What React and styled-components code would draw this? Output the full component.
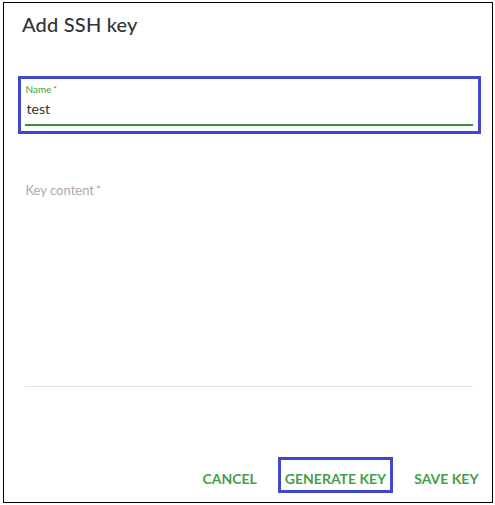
import React from "react";
import styled, { createGlobalStyle } from "styled-components";

const Global = createGlobalStyle`
  html, body { margin: 0; padding: 0; background: #fff; }
  body { font-family: Lato, "Open Sans", sans-serif; }
`;

const Frame = styled.div`
  box-sizing: border-box;
  margin: 2px 0 0 3px;
  width: 490px;
  height: 501px;
  border: 1.5px solid #000;
  display: flex;
  flex-direction: column;
  background: #fff;
`;

const Title = styled.h2`
  margin: 0;
  padding: 9px 0 0 18px;
  font-size: 20px;
  line-height: 25px;
  font-weight: 500;
  color: #333;
  letter-spacing: 0.2px;
`;

const Field = styled.div`
  box-sizing: border-box;
  margin: ${(p) => p.$top}px 11px 0 13.5px;
  border: 3px solid ${(p) => (p.$highlight ? "#4047cc" : "transparent")};
  padding: 4px 5px 5px 4px;
  display: flex;
  flex-direction: column;
`;

const Label = styled.label`
  font-size: ${(p) => (p.$focused ? "10px" : "13px")};
  line-height: ${(p) => (p.$focused ? "12px" : "16px")};
  color: ${(p) => (p.$focused ? "#43a047" : "#aaa")};
  padding-left: 1px;
`;

const Star = styled.span`
  color: ${(p) => (p.$focused ? "#e53935" : "#aaa")};
  margin-left: 2px;
  font-size: ${(p) => (p.$focused ? "8px" : "11px")};
  vertical-align: top;
`;

const Value = styled.div`
  margin-top: 5px;
  padding-left: 2px;
  font-size: 14px;
  line-height: 18px;
  color: #333;
  padding-bottom: 6px;
  border-bottom: 2px solid #388e3c;
`;

const TextArea = styled.div`
  height: 188px;
  border-bottom: 1px solid #e0e0e0;
`;

const Spacer = styled.div`
  flex: 1;
`;

const Actions = styled.div`
  display: flex;
  justify-content: flex-end;
  align-items: flex-start;
  gap: 15px;
  padding: 0 7px 9px 0;
`;

const Button = styled.button`
  box-sizing: border-box;
  height: 36px;
  border: 3px solid ${(p) => (p.$highlight ? "#4047cc" : "transparent")};
  background: none;
  padding: 11px 3.5px 0;
  font-family: Lato, "Open Sans", sans-serif;
  font-weight: 700;
  font-size: 14px;
  line-height: 16px;
  color: #43a047;
  text-transform: uppercase;
  cursor: pointer;
  display: flex;
  align-items: flex-start;
`;

export default function App() {
  return (
    <>
      <Global />
      <Frame>
        <Title>Add SSH key</Title>
        <Field $highlight $top={39}>
          <Label $focused>
            Name<Star $focused>*</Star>
          </Label>
          <Value>test</Value>
        </Field>
        <Field $top={41}>
          <Label>
            Key content<Star>*</Star>
          </Label>
          <TextArea />
        </Field>
        <Spacer />
        <Actions>
          <Button>Cancel</Button>
          <Button $highlight>Generate key</Button>
          <Button>Save key</Button>
        </Actions>
      </Frame>
    </>
  );
}
